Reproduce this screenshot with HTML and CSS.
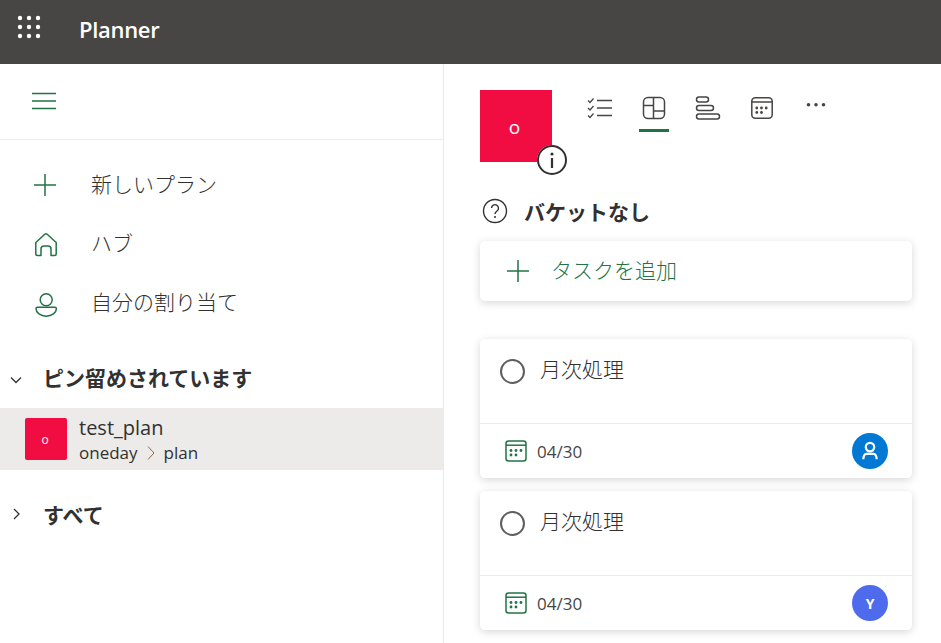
FILE: index.html
```html
<!DOCTYPE html>
<html lang="ja">
<head>
<meta charset="utf-8">
<title>Planner</title>
<link rel="stylesheet" href="styles.css">
</head>
<body>
<header class="topbar">
  <svg class="waffle" width="24" height="24" viewBox="0 0 24 24" fill="#fff"><circle cx="3" cy="3" r="2.200"/><circle cx="12" cy="3" r="2.200"/><circle cx="21" cy="3" r="2.200"/><circle cx="3" cy="12" r="2.200"/><circle cx="12" cy="12" r="2.200"/><circle cx="21" cy="12" r="2.200"/><circle cx="3" cy="21" r="2.200"/><circle cx="12" cy="21" r="2.200"/><circle cx="21" cy="21" r="2.200"/></svg>
  <span class="brand">Planner</span>
</header>
<div class="shell">
  <aside class="sidebar">
    <div class="menu-row">
      <svg width="24" height="18" viewBox="0 0 24 18" fill="none" stroke="#217346" stroke-width="1.400"><path d="M0 1.500h24M0 9h24M0 16.500h24"/></svg>
    </div>
    <nav class="nav">
      <div class="nav-item">
        <svg class="nav-icon" width="24" height="24" viewBox="0 0 24 24" fill="none" stroke="#217346" stroke-width="1.500"><path d="M12 1v22M1 12h22"/></svg>
        <span>新しいプラン</span>
      </div>
      <div class="nav-item">
        <svg class="nav-icon" width="24" height="24" viewBox="0 0 24 24" fill="none" stroke="#217346" stroke-width="1.500" stroke-linejoin="round"><path d="M2.800 10.500 11.800 2.200a1.800 1.800 0 0 1 2.400 0l9 8.300V22a1.500 1.500 0 0 1-1.500 1.500H18V17a3 3 0 0 0-3-3h-4a3 3 0 0 0-3 3v6.500H4.300A1.500 1.500 0 0 1 2.800 22z"/></svg>
        <span>ハブ</span>
      </div>
      <div class="nav-item">
        <svg class="nav-icon nav-icon-tall" width="24" height="24" viewBox="0 0 24 24" fill="none" stroke="#217346" stroke-width="1.500"><circle cx="13.200" cy="8.800" r="6"/><path d="M4.500 16.200h17.400c.9 0 1.500.6 1.500 1.500 0 4-4.500 7.500-10.200 7.500S3 21.700 3 17.700c0-.9.600-1.500 1.500-1.500z"/></svg>
        <span>自分の割り当て</span>
      </div>
    </nav>
    <div class="section-head section-pinned">
      <svg class="chev chev-down" width="12" height="12" viewBox="0 0 12 12" fill="none" stroke="#323130" stroke-width="1.300"><path d="M1 3.500 6 8.500 11 3.500"/></svg>
      <span>ピン留めされています</span>
    </div>
    <div class="plan-row">
      <div class="plan-thumb">o</div>
      <div class="plan-text">
        <div class="plan-name">test_plan</div>
        <div class="plan-path">
          <span>oneday</span>
          <svg width="10" height="16" viewBox="0 0 10 16" fill="none" stroke="#8a6d3b" stroke-width="1"><path d="M2 1.500 8 8l-6 6.500"/></svg>
          <span>plan</span>
        </div>
      </div>
    </div>
    <div class="section-head section-all">
      <svg class="chev" width="12" height="12" viewBox="0 0 12 12" fill="none" stroke="#323130" stroke-width="1.300"><path d="M4 1 9 6 4 11"/></svg>
      <span>すべて</span>
    </div>
  </aside>
  <main class="main">
    <div class="plan-head">
      <div class="logo-wrap">
        <div class="logo">o</div>
        <div class="info">
          <svg width="30" height="30" viewBox="0 0 30 30"><circle cx="15" cy="15" r="14" fill="#fff" stroke="#323130" stroke-width="2"/><circle cx="15" cy="9" r="1.600" fill="#323130"/><path d="M15 13v10" stroke="#323130" stroke-width="2.200" fill="none"/></svg>
        </div>
      </div>
      <div class="tabs">
        <div class="tab">
          <svg width="26" height="24" viewBox="0 0 26 24" fill="none" stroke="#484644" stroke-width="1.500"><path d="M1 4.500 3 6.500 6.500 2.500M1 12 3 14 6.500 10M1 19.500 3 21.500 6.500 17.500" stroke-width="1.300"/><path d="M10 4.500h15M10 12h15M10 19.500h15"/></svg>
        </div>
        <div class="tab tab-active">
          <svg width="24" height="24" viewBox="0 0 24 24" fill="none" stroke="#484644" stroke-width="1.500"><rect x="1.500" y="1.500" width="21" height="21" rx="4.500"/><path d="M1.500 9.500h10M11.500 1.500v21M11.500 15h11"/></svg>
        </div>
        <div class="tab">
          <svg width="26" height="24" viewBox="0 0 26 24" fill="none" stroke="#484644" stroke-width="1.500"><rect x="1.500" y="1" width="12" height="5" rx="2.500"/><rect x="1.500" y="9.500" width="17" height="5" rx="2.500"/><rect x="1.500" y="18" width="23" height="5" rx="2.500"/></svg>
        </div>
        <div class="tab">
          <svg width="24" height="24" viewBox="0 0 24 24" fill="none" stroke="#484644" stroke-width="1.500"><rect x="1.800" y="1.800" width="20.400" height="20.400" rx="3.500"/><path d="M1.800 6h20.400"/><g fill="#484644" stroke="none"><circle cx="6.800" cy="12" r="1.400"/><circle cx="11.500" cy="12" r="1.400"/><circle cx="16.200" cy="12" r="1.400"/><circle cx="6.800" cy="16.500" r="1.400"/><circle cx="11.500" cy="16.500" r="1.400"/></g></svg>
        </div>
        <div class="tab">
          <svg width="24" height="24" viewBox="0 0 24 24" fill="#484644"><circle cx="4.500" cy="8.800" r="1.800"/><circle cx="12" cy="8.800" r="1.800"/><circle cx="19.500" cy="8.800" r="1.800"/></svg>
        </div>
      </div>
    </div>
    <div class="bucket">
      <svg width="26" height="26" viewBox="0 0 26 26" fill="none" stroke="#323130" stroke-width="1.400"><circle cx="13" cy="13" r="11.500"/><path d="M9.500 10a3.500 3.500 0 1 1 5.500 3c-1.300.9-2 1.600-2 3"/><circle cx="13" cy="19" r="1" fill="#323130" stroke="none"/></svg>
      <span>バケットなし</span>
    </div>
    <div class="card add-card">
      <svg width="24" height="24" viewBox="0 0 24 24" fill="none" stroke="#217346" stroke-width="1.500"><path d="M12 1v22M1 12h22"/></svg>
      <span>タスクを追加</span>
    </div>
    <div class="tasks">
      <article class="card task">
        <div class="task-top"><span class="check"></span><span class="task-title">月次処理</span></div>
        <div class="task-foot">
          <svg class="cal" width="22" height="22" viewBox="0 0 22 22" fill="none" stroke="#217346" stroke-width="1.500"><rect x="1" y="1" width="20" height="20" rx="2.500"/><path d="M1 5.200h20"/><g fill="#217346" stroke="none"><circle cx="6" cy="10.500" r="1.400"/><circle cx="11" cy="10.500" r="1.400"/><circle cx="16" cy="10.500" r="1.400"/><circle cx="6" cy="15" r="1.400"/><circle cx="11" cy="15" r="1.400"/></g></svg>
          <span class="date">04/30</span>
          <span class="avatar avatar-blue">
            <svg width="20" height="20" viewBox="0 0 18 18" fill="none" stroke="#fff" stroke-width="2"><circle cx="9" cy="5.500" r="3.800"/><path d="M3 16.500c0-3 1.500-5 2.500-5h7c1 0 2.500 2 2.500 5"/></svg>
          </span>
        </div>
      </article>
      <article class="card task">
        <div class="task-top"><span class="check"></span><span class="task-title">月次処理</span></div>
        <div class="task-foot">
          <svg class="cal" width="22" height="22" viewBox="0 0 22 22" fill="none" stroke="#217346" stroke-width="1.500"><rect x="1" y="1" width="20" height="20" rx="2.500"/><path d="M1 5.200h20"/><g fill="#217346" stroke="none"><circle cx="6" cy="10.500" r="1.400"/><circle cx="11" cy="10.500" r="1.400"/><circle cx="16" cy="10.500" r="1.400"/><circle cx="6" cy="15" r="1.400"/><circle cx="11" cy="15" r="1.400"/></g></svg>
          <span class="date">04/30</span>
          <span class="avatar avatar-indigo">Y</span>
        </div>
      </article>
    </div>
  </main>
</div>
</body>
</html>
```
FILE: styles.css
```css
* { box-sizing: border-box; }
html, body { margin: 0; height: 100%; overflow: hidden; background: #fff; }
body {
  font-family: "Open Sans", "Noto Sans CJK JP", sans-serif;
  color: #323130;
}
.topbar {
  height: 64px;
  background: #484644;
  display: flex;
  align-items: center;
  padding: 0 0 6px 17px;
}
.waffle { width: 24px; height: 24px; flex: none; margin-top: -4px; }
.brand {
  margin-left: 38px;
  color: #fff;
  font-size: 22px;
  font-weight: 600;
  line-height: 28px;
  letter-spacing: -0.3px;
}
.shell { display: flex; height: 579px; }
.sidebar { width: 444px; flex: none; border-right: 1px solid #edebe9; }
.menu-row {
  height: 76px;
  border-bottom: 1px solid #edebe9;
  display: flex;
  align-items: center;
  padding: 0 0 1px 32px;
}
.nav { padding-top: 15px; }
.nav-item {
  height: 59px;
  display: flex;
  align-items: center;
  padding-left: 33px;
  font-size: 21px;
  font-weight: 300;
  color: #323130;
}
.nav-item span { margin-bottom: 3px; }
.nav-icon { flex: none; margin-right: 34px; overflow: visible; }
.section-head {
  display: flex;
  align-items: center;
  font-size: 21px;
  font-weight: 700;
  height: 30px;
  padding-left: 10px;
}
.section-pinned { margin-top: 30px; }
.section-all { margin-top: 29px; }
.chev { flex: none; margin-right: 21px; }
.chev-down { margin-top: 5px; }
.plan-row {
  margin-top: 16px;
  height: 62px;
  background: #edebe9;
  display: flex;
  align-items: center;
  padding-left: 25px;
}
.plan-thumb {
  width: 42px;
  height: 42px;
  border-radius: 2px;
  background: #f10d41;
  color: #fff;
  font-size: 12px;
  padding-right: 2px;
  display: flex;
  align-items: center;
  justify-content: center;
  flex: none;
}
.plan-text { margin-left: 12px; padding-top: 2px; }
.plan-name { font-size: 20px; line-height: 26px; }
.plan-path {
  font-size: 17px;
  line-height: 24px;
  display: flex;
  align-items: center;
  gap: 8px;
}
.main { flex: 1; padding: 26px 29px 0 36px; min-width: 0; }
.plan-head { display: flex; height: 72px; }
.logo-wrap { position: relative; width: 72px; height: 72px; flex: none; }
.logo {
  width: 72px;
  height: 72px;
  background: #f10d41;
  color: #fff;
  font-size: 19px;
  padding: 2px 3px 0 0;
  display: flex;
  align-items: center;
  justify-content: center;
}
.info { position: absolute; left: 57px; top: 55px; width: 30px; height: 30px; background: #fff; border-radius: 50%; }
.info svg { display: block; }
.tabs { display: flex; margin-left: 21px; height: 42px; }
.tab {
  width: 54px;
  height: 42px;
  display: flex;
  justify-content: center;
  padding-top: 6px;
  position: relative;
}
.tab-active::after {
  content: "";
  position: absolute;
  left: 12px;
  right: 12px;
  bottom: 0;
  height: 3px;
  background: #217346;
}
.bucket {
  margin-top: 34px;
  height: 30px;
  display: flex;
  align-items: center;
  gap: 16px;
  padding-left: 2px;
  font-size: 21px;
  font-weight: 700;
}
.card {
  background: #fff;
  border-radius: 5px;
  box-shadow: 0 2px 8px rgba(0, 0, 0, 0.16);
}
.add-card {
  margin-top: 15px;
  height: 60px;
  display: flex;
  align-items: center;
  padding-left: 26px;
  gap: 21px;
  color: #217346;
  font-size: 21px;
  font-weight: 300;
}
.add-card span { margin-bottom: 4px; }
.tasks { margin-top: 38px; display: flex; flex-direction: column; gap: 13px; }
.task { height: 139px; display: flex; flex-direction: column; }
.task-top { height: 84px; display: flex; align-items: flex-start; padding: 16px 0 0 20px; }
.check {
  width: 25px;
  height: 25px;
  border: 2px solid #605e5c;
  border-radius: 50%;
  flex: none;
  margin-top: 4px;
}
.task-title { margin-left: 15px; font-size: 21px; line-height: 28px; font-weight: 300; }
.task-foot {
  flex: 1;
  border-top: 1px solid #edebe9;
  display: flex;
  align-items: center;
  padding: 0 24px 0 25px;
}
.cal { flex: none; }
.date { margin-left: 10px; font-size: 17px; color: #484644; }
.avatar {
  margin-left: auto;
  width: 36px;
  height: 36px;
  border-radius: 50%;
  display: flex;
  align-items: center;
  justify-content: center;
  color: #fff;
  font-size: 14px;
  font-weight: 700;
}
.avatar-blue { background: #0078d4; }
.avatar-indigo { background: #4f6bed; }
```
